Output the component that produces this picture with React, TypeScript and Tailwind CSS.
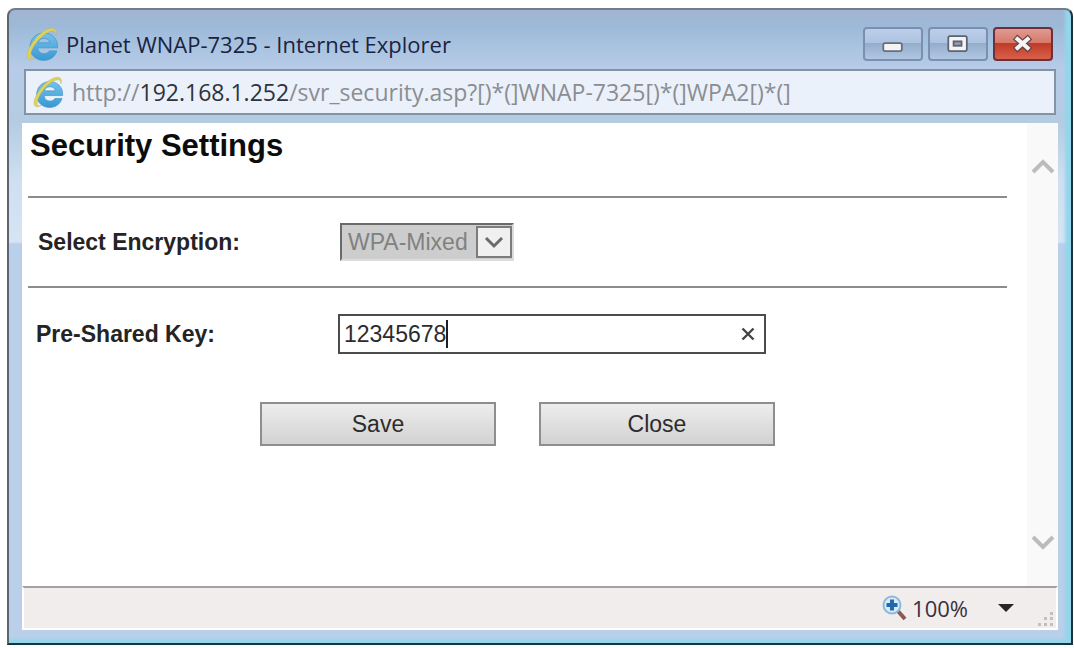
import { useRef, useState } from "react";

function ExplorerIcon({ className }: { className?: string }) {
    return (
        <svg viewBox="0 0 34 34" className={className} aria-hidden="true">
            <defs>
                <linearGradient id="globe" x1="0" y1="0" x2="0" y2="1">
                    <stop offset="0" stopColor="#74c2ec" />
                    <stop offset="1" stopColor="#3a97d4" />
                </linearGradient>
            </defs>
            <path
                d="M32.600 20.800H12.800C13.300 24.800 15.800 26.600 19 26.600c2.500 0 4.300-.9 5.300-2.700h7.600C30 30 25.200 33.400 18.700 33.400 10.700 33.400 5 27.900 5 19.900 5 11.700 10.800 6 18.900 6c8.500 0 14.300 6 13.700 14.800zM24.900 15.800c-.7-2.900-2.700-4.400-5.900-4.400-3.100 0-5.200 1.600-5.900 4.400z"
                fill="url(#globe)"
                stroke="#4a9acb"
                strokeWidth=".8"
            />
            <path
                d="M30.800 8.500C31.800 5.200 31.300 2.600 29 1.600 24.500-.2 15 5.200 8.500 14.200 2.500 22.500.3 30.200 3.800 32.300c1.300.8 3.300.4 5.700-.9-1.800.5-3 .2-3.600-.8C4.700 27.800 7 21 12 14.800 17.500 7.900 25 3.200 28.600 4c1.500.5 2.200 2.200 2.200 4.500z"
                fill="#e0d158"
                stroke="#b7b060"
                strokeWidth=".4"
            />
        </svg>
    );
}

function MinimizeIcon() {
    return (
        <svg viewBox="0 0 60 34" className="h-full w-full" aria-hidden="true">
            <rect x="19" y="16" width="21" height="9" rx="2" fill="#f4f4f4" stroke="#686d7a" strokeWidth="2" />
        </svg>
    );
}

function MaximizeIcon() {
    return (
        <svg viewBox="0 0 60 34" className="h-full w-full" aria-hidden="true">
            <rect x="19" y="8" width="21" height="17" rx="2" fill="#f4f4f4" stroke="#5d6270" strokeWidth="2" />
            <rect x="25" y="14" width="9" height="5" fill="#8d9db5" stroke="#5d6270" strokeWidth="2" />
        </svg>
    );
}

function CloseIcon() {
    return (
        <svg viewBox="0 0 60 34" className="h-full w-full" aria-hidden="true">
            <g fill="none">
                <path d="M21 9l17 15M38 9L21 24" stroke="#68474c" strokeWidth="7.500" />
                <path d="M22 10l15 13M37 10L22 23" stroke="#f5f3f3" strokeWidth="4.600" />
            </g>
        </svg>
    );
}

function MagnifierIcon() {
    return (
        <svg viewBox="0 0 26 26" className="size-[26px]" aria-hidden="true">
            <path d="M15 15l8 9" stroke="#8a5a50" strokeWidth="4" />
            <circle cx="10" cy="10" r="8.500" fill="#d8ecfa" stroke="#8fb9dc" strokeWidth="2" />
            <path d="M10 4.500v11M4.500 10h11" stroke="#2566ad" strokeWidth="4" />
        </svg>
    );
}

function Chevron({ className, d, width }: { className: string; d: string; width: number }) {
    return (
        <svg viewBox="0 0 24 16" className={className} fill="none" aria-hidden="true">
            <path d={d} stroke="currentColor" strokeWidth={width} />
        </svg>
    );
}

const captionButtons = [
    {
        label: "Minimize",
        icon: MinimizeIcon,
        style: "border-[#7c8fb0] bg-[linear-gradient(#bccfe9_0%,#adc3e1_45%,#93acca_46%,#b0c7e4_100%)]",
    },
    {
        label: "Maximize",
        icon: MaximizeIcon,
        style: "border-[#7c8fb0] bg-[linear-gradient(#bccfe9_0%,#adc3e1_45%,#93acca_46%,#b0c7e4_100%)]",
    },
    {
        label: "Close window",
        icon: CloseIcon,
        style: "border-[#6d2f3a] bg-[linear-gradient(#e09a90_0%,#d87a6c_45%,#bf3a26_46%,#d8604a_100%)]",
    },
];

function TitleBar() {
    return (
        <header className="flex items-center gap-[7px] pt-[17px] pr-[5px] pb-2 pl-[3px]">
            <ExplorerIcon className="size-[34px] shrink-0" />
            <h1 className="grow truncate font-['Open_Sans',sans-serif] text-[22px] leading-8 text-[#1c2340]">
                Planet WNAP-7325 - Internet Explorer
            </h1>
            <div className="flex shrink-0 gap-[5px]">
                {captionButtons.map(({ label, icon: Icon, style }) => (
                    <button
                        key={label}
                        type="button"
                        aria-label={label}
                        className={`h-[34px] w-[60px] rounded-[4px] border-2 ${style}`}
                    >
                        <Icon />
                    </button>
                ))}
            </div>
        </header>
    );
}

function AddressBar() {
    return (
        <div className="mx-0.5 mb-2 flex h-[46px] items-center gap-2 border-2 border-[#8293a6] bg-[#eaf1fa] pl-1.5">
            <ExplorerIcon className="size-8 shrink-0" />
            <p className="truncate font-['Open_Sans',sans-serif] text-[23px] leading-8 text-[#8b8d92]">
                http://<span className="text-[#30323a]">192.168.1.252</span>
                /svr_security.asp?[)*(]WNAP-7325[)*(]WPA2[)*(]
            </p>
        </div>
    );
}

function SecurityForm() {
    const [key, setKey] = useState("12345678");
    const keyRef = useRef<HTMLInputElement>(null);

    return (
        <form className="grow pt-[5px] pr-5 pl-1.5" onSubmit={(e) => e.preventDefault()}>
            <h2 className="pl-0.5 text-[31px] leading-9 font-bold text-[#0c0c0c]">Security Settings</h2>

            <div className="mt-8 flex items-center border-y-2 border-[#8c8c8c] py-[25px]">
                <label htmlFor="encryption" className="w-[312px] shrink-0 pl-2.5 text-[23px] font-bold">
                    Select Encryption:
                </label>
                <div className="relative">
                    <select
                        id="encryption"
                        disabled
                        className="block h-[38px] w-[174px] appearance-none border-t-2 border-r-2 border-b-2 border-l-2 border-[#dcdcdc] border-t-[#6a6a6a] border-l-[#6a6a6a] bg-[#cdcdcd] pl-1.5 text-[23px] text-[#818181] opacity-100"
                    >
                        <option>WPA-Mixed</option>
                    </select>
                    <span className="pointer-events-none absolute inset-y-[3px] right-0.5 flex w-9 items-center justify-center border-2 border-[#7c7c7c] bg-[#f0f0f0] text-[#6a6a6a]">
                        <Chevron className="h-4 w-6" d="M4 4l8 8 8-8" width={3} />
                    </span>
                </div>
            </div>

            <div className="mt-[26px] flex items-center">
                <label htmlFor="psk" className="w-[310px] shrink-0 pl-2 text-[23px] font-bold">
                    Pre-Shared Key:
                </label>
                <div className="flex h-10 w-[428px] items-center border-2 border-[#4c4c4c] bg-white pl-1">
                    <input
                        id="psk"
                        ref={keyRef}
                        type="text"
                        value={key}
                        onChange={(e) => setKey(e.target.value)}
                        className="field-sizing-content text-[23px] text-[#2c2c2c] outline-none"
                    />
                    <span className="h-7 w-0.5 bg-[#1e1e2a]" />
                    <button
                        type="button"
                        aria-label="Clear"
                        onClick={() => {
                            setKey("");
                            keyRef.current?.focus();
                        }}
                        className="mr-2 ml-auto"
                    >
                        <svg viewBox="0 0 16 16" className="size-4" aria-hidden="true">
                            <path d="M2.500 2.500l11 11M13.500 2.500l-11 11" stroke="#444" strokeWidth="2.400" />
                        </svg>
                    </button>
                </div>
            </div>

            <div className="mt-12 flex justify-center gap-[43px]">
                {["Save", "Close"].map((label) => (
                    <button
                        key={label}
                        type="button"
                        className="h-11 w-[236px] border-2 border-[#8e8e8e] bg-linear-to-b from-[#ededed] to-[#d2d2d2] text-[23px] text-[#2c2c2c]"
                    >
                        {label}
                    </button>
                ))}
            </div>
        </form>
    );
}

function StatusBar() {
    return (
        <footer className="flex h-11 items-center justify-end border-t-2 border-r-2 border-b-2 border-l-2 border-white border-t-[#a3a09f] bg-[#f0edec] pr-0.5">
            <MagnifierIcon />
            <span className="ml-1 font-['Open_Sans',sans-serif] text-[22px] leading-8 text-[#3a2f3c]">100%</span>
            <button type="button" aria-label="Zoom level" className="ml-[30px]">
                <svg viewBox="0 0 16 8" className="h-2 w-4" aria-hidden="true">
                    <path d="M0 0h16L8 8z" fill="#2a2426" />
                </svg>
            </button>
            <svg viewBox="0 0 16 16" className="ml-6 size-4 self-end" fill="#c3bfbf" aria-hidden="true">
                <path d="M12 0h3v3h-3zM6 5h3v3H6zM12 5h3v3h-3zM0 11h3v3H0zM6 11h3v3H6zM12 11h3v3h-3z" />
            </svg>
        </footer>
    );
}

export default function App() {
    return (
        <div className="flex min-h-screen flex-col bg-white pt-2 pr-px pb-[3px] pl-[7px] font-['Liberation_Sans',Arial,sans-serif] text-[#242424]">
            <div className="flex grow flex-col rounded-t-lg border-2 border-[#17333f] border-t-[#6f7d8c] border-l-[#5f656e] bg-[linear-gradient(#a2b4d0_0px,#9db9d8_16px,#a8c3e0_36px,#b7cbe8_58px,#b4cce2_112px,#cfdff1_170px,#d6e4f3_232px,#b9cfea_234px,#b9cfea_100%)] pr-[13px] pb-[13px] pl-[13px] shadow-[inset_-6px_-4px_3px_#93d6ec]">
                <TitleBar />
                <AddressBar />
                <main className="flex grow bg-white">
                    <SecurityForm />
                    <div className="flex w-[31px] shrink-0 flex-col items-center justify-between bg-[#f9f9fa] pt-9 pb-9 text-[#bcbcbc]">
                        <Chevron className="h-4 w-6" d="M2 13L12 3l10 10" width={4} />
                        <Chevron className="h-4 w-6" d="M2 3l10 10L22 3" width={4} />
                    </div>
                </main>
                <StatusBar />
            </div>
        </div>
    );
}
